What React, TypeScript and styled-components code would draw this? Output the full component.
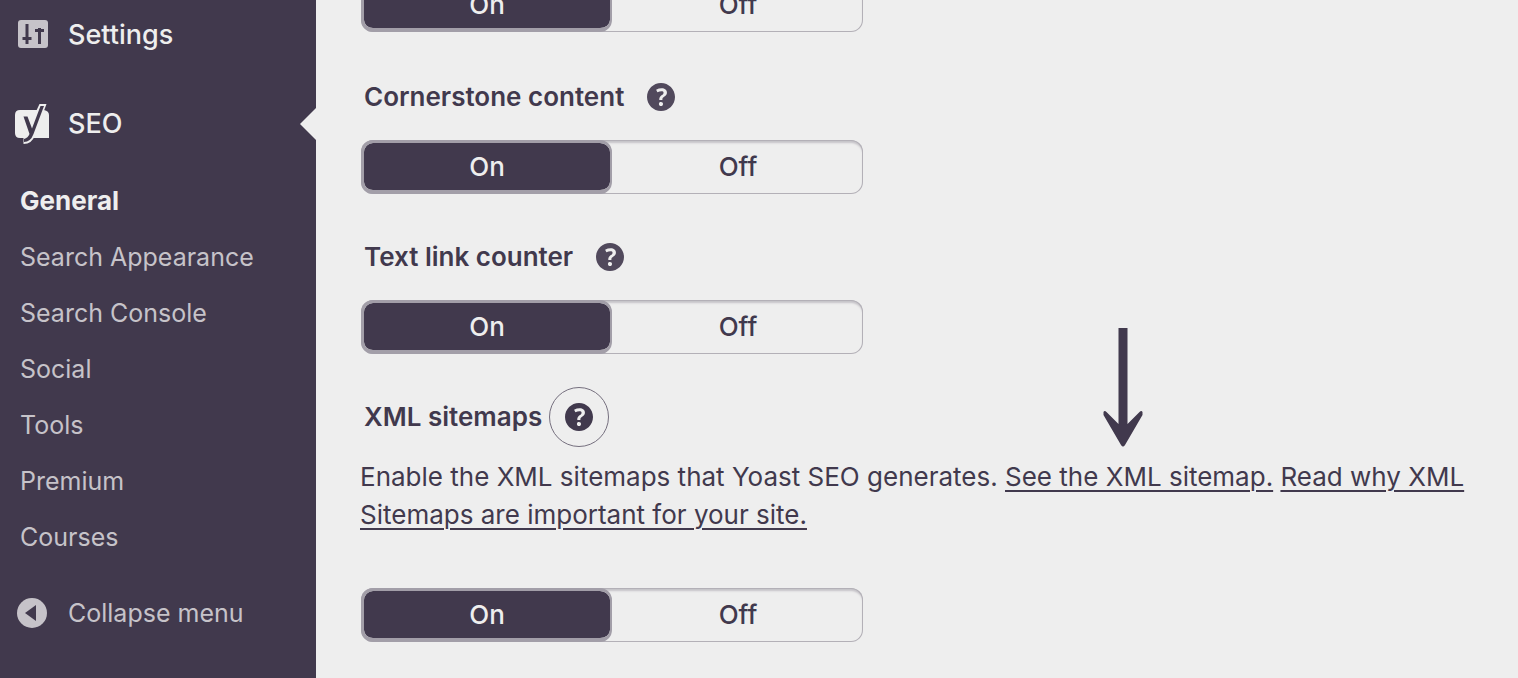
import React from "react";
import styled, { createGlobalStyle } from "styled-components";

const ink = "#41394d";
const paper = "#eeeeee";
const muted = "#c6c3c9";

const GlobalStyle = createGlobalStyle`
  *, *::before, *::after { box-sizing: border-box; }
  body {
    margin: 0;
    background: ${paper};
    color: ${ink};
    font-family: Inter, "Liberation Sans", sans-serif;
    font-size: 26px;
    line-height: 38px;
  }
`;

const Page = styled.div`
  display: flex;
  height: 100vh;
  overflow: hidden;
`;

const Sidebar = styled.nav`
  flex: 0 0 316px;
  padding-top: 1px;
  background: ${ink};
  color: ${paper};
`;

const MenuLink = styled.a<{ $current?: boolean }>`
  display: flex;
  align-items: center;
  gap: 18px;
  height: ${(p) => (p.$current ? "72px" : "68px")};
  padding-left: 14px;
  margin-bottom: ${(p) => (p.$current ? "13px" : "19px")};
  color: ${paper};
  font-size: 27px;
  font-weight: 500;
  text-decoration: none;
`;

const Pointer = styled.svg`
  margin-left: auto;
`;

const Submenu = styled.ul`
  list-style: none;
  margin: 0;
  padding: 0;
`;

const SubmenuLink = styled.a<{ $active?: boolean }>`
  display: block;
  padding: 9px 20px;
  color: ${(p) => (p.$active ? paper : muted)};
  font-size: ${(p) => (p.$active ? "26px" : "25px")};
  font-weight: ${(p) => (p.$active ? 700 : 400)};
  text-decoration: none;
`;

const Collapse = styled.button`
  display: flex;
  align-items: center;
  gap: 18px;
  width: 100%;
  height: 56px;
  margin-top: 20px;
  padding: 0 0 0 14px;
  border: 0;
  background: none;
  color: ${muted};
  font: inherit;
  font-size: 25px;
`;

const Main = styled.main`
  flex: 1;
  min-width: 0;
  margin-top: -22px;
  padding: 0 40px 0 44px;
`;

const Feature = styled.section`
  margin-bottom: 44px;

  &:first-child {
    margin-bottom: 46px;
  }
`;

const FeatureHead = styled.div<{ $open?: boolean }>`
  display: flex;
  align-items: center;
  gap: 7px;
  height: 38px;
  margin-bottom: ${(p) => (p.$open ? "22px" : "24px")};
  padding-left: 4px;
`;

const Title = styled.h2`
  margin: 0;
  font-size: 26px;
  font-weight: 600;
`;

const HelpButton = styled.button<{ $open?: boolean }>`
  display: grid;
  place-items: center;
  width: 60px;
  height: 60px;
  padding: 0;
  border: 1px solid ${(p) => (p.$open ? "#756f7e" : "transparent")};
  border-radius: 50%;
  background: none;
  color: ${(p) => (p.$open ? ink : "#51495c")};
`;

const HelpText = styled.p`
  margin: 0 0 54px;
`;

const TextLink = styled.a`
  color: inherit;
  text-decoration-thickness: 2px;
  text-underline-offset: 4px;
`;

const Track = styled.fieldset`
  display: flex;
  width: 502px;
  height: 54px;
  margin: 0 0 0 1px;
  padding: 0;
  border: 0;
  border-radius: 12px;
  box-shadow: inset 0 0 0 1px #b3b0b7, inset 0 3px 2px #c5c3c8;
`;

const Segment = styled.label<{ $on?: boolean }>`
  flex: 1;
  display: flex;
  align-items: center;
  justify-content: center;
  border: solid ${(p) => (p.$on ? "#a29ea8" : "transparent")};
  border-width: 3px 2px 4px 3px;
  border-radius: 12px;
  background: ${(p) => (p.$on ? ink : "transparent")};
  background-clip: padding-box;
  color: ${(p) => (p.$on ? paper : ink)};
  font-weight: 500;
`;

const Radio = styled.input`
  appearance: none;
  width: 0;
  height: 0;
  margin: 0;
`;

const Arrow = styled.svg`
  position: absolute;
  left: 44%;
  bottom: 100%;
  margin-bottom: 14px;
  transform: translateX(-50%);
`;

const ArrowAnchor = styled.span`
  position: relative;
`;

function SettingsIcon() {
  return (
    <svg width="36" height="40" viewBox="0 0 36 40" aria-hidden="true">
      <rect x="4" y="5" width="30" height="28" rx="3" fill={muted} />
      <path d="M13 9v20M8.500 23.500h9M25.500 13v16M21 15.500h9" fill="none" stroke={ink} strokeWidth="3" />
    </svg>
  );
}

function YoastIcon() {
  return (
    <svg width="36" height="42" viewBox="0 -1 36 42" aria-hidden="true">
      <path d="M6 6h24q5 1 5 5v23H6q-5 0-5-5V11q0-5 5-5z" fill={paper} />
      <path d="M25.500 0h7L21 31q-3 9-11.500 9v-6z" fill={paper} />
      <path d="M9.500 12.500h4l4.500 12L26.500 2H30L19.500 30q-3 8-9.500 8v-3q4-1 5.500-5z" fill={ink} />
    </svg>
  );
}

function CollapseIcon() {
  return (
    <svg width="36" height="36" viewBox="0 0 36 36" aria-hidden="true">
      <circle cx="18" cy="18" r="15" fill={muted} />
      <path d="M22 10v16L11 18z" fill={ink} />
    </svg>
  );
}

function HelpIcon() {
  return (
    <svg width="40" height="40" viewBox="0 0 20 20" fill="currentColor" aria-hidden="true">
      <path d="M17 10c0-3.87-3.14-7-7-7-3.87 0-7 3.13-7 7s3.13 7 7 7c3.86 0 7-3.13 7-7zm-6.3 1.48H9.14v-.43c0-.38.08-.7.24-.98s.46-.57.88-.89c.41-.29.68-.53.81-.71.14-.18.2-.39.2-.62 0-.25-.09-.44-.28-.58-.19-.13-.45-.19-.79-.19-.58 0-1.25.19-2 .57l-.64-1.28c.87-.49 1.8-.74 2.77-.74.81 0 1.45.2 1.92.58.48.39.71.91.71 1.55 0 .43-.09.8-.29 1.11-.19.32-.57.67-1.11 1.06-.38.28-.61.49-.71.63-.1.15-.15.34-.15.57v.35zm-1.47 2.74c-.18-.17-.27-.42-.27-.73 0-.33.08-.58.26-.75s.43-.25.77-.25c.32 0 .57.09.75.26s.27.42.27.74c0 .3-.09.55-.27.72-.18.18-.43.27-.75.27-.33 0-.58-.09-.76-.26z" />
    </svg>
  );
}

function Toggle({ name }: { name: string }) {
  return (
    <Track aria-label={name}>
      <Segment $on>
        <Radio type="radio" name={name} defaultChecked />
        On
      </Segment>
      <Segment>
        <Radio type="radio" name={name} />
        Off
      </Segment>
    </Track>
  );
}

function Heading({ title, open }: { title: string; open?: boolean }) {
  return (
    <FeatureHead $open={open}>
      <Title>{title}</Title>
      <HelpButton type="button" $open={open} aria-expanded={!!open} aria-label={"Help on " + title}>
        <HelpIcon />
      </HelpButton>
    </FeatureHead>
  );
}

const submenu = ["General", "Search Appearance", "Search Console", "Social", "Tools", "Premium", "Courses"];

export default function App() {
  return (
    <Page>
      <GlobalStyle />
      <Sidebar>
        <MenuLink href="#settings">
          <SettingsIcon />
          Settings
        </MenuLink>
        <MenuLink href="#seo" $current>
          <YoastIcon />
          SEO
          <Pointer width="16" height="32" viewBox="0 0 16 32" aria-hidden="true">
            <path d="M16 0v32L0 16z" fill={paper} />
          </Pointer>
        </MenuLink>
        <Submenu>
          {submenu.map((item, i) => (
            <li key={item}>
              <SubmenuLink href="#" $active={i === 0}>{item}</SubmenuLink>
            </li>
          ))}
        </Submenu>
        <Collapse type="button">
          <CollapseIcon />
          Collapse menu
        </Collapse>
      </Sidebar>
      <Main>
        <Feature>
          <Toggle name="Readability analysis" />
        </Feature>
        <Feature>
          <Heading title="Cornerstone content" />
          <Toggle name="Cornerstone content" />
        </Feature>
        <Feature>
          <Heading title="Text link counter" />
          <Toggle name="Text link counter" />
        </Feature>
        <Feature>
          <Heading title="XML sitemaps" open />
          <HelpText>
            Enable the XML sitemaps that Yoast SEO generates.{" "}
            <ArrowAnchor>
              <TextLink href="#sitemap">See the XML sitemap.</TextLink>
              <Arrow width="40" height="120" viewBox="0 0 40 120" aria-hidden="true">
                <path d="M15.500 1h9v96l12-12q2-2 3 0v3L22 118q-2 3-4 0L.500 88v-3q1-2 3 0l12 12z" fill={ink} />
              </Arrow>
            </ArrowAnchor>{" "}
            <TextLink href="#why">Read why XML Sitemaps are important for your site.</TextLink>
          </HelpText>
          <Toggle name="XML sitemaps" />
        </Feature>
      </Main>
    </Page>
  );
}
